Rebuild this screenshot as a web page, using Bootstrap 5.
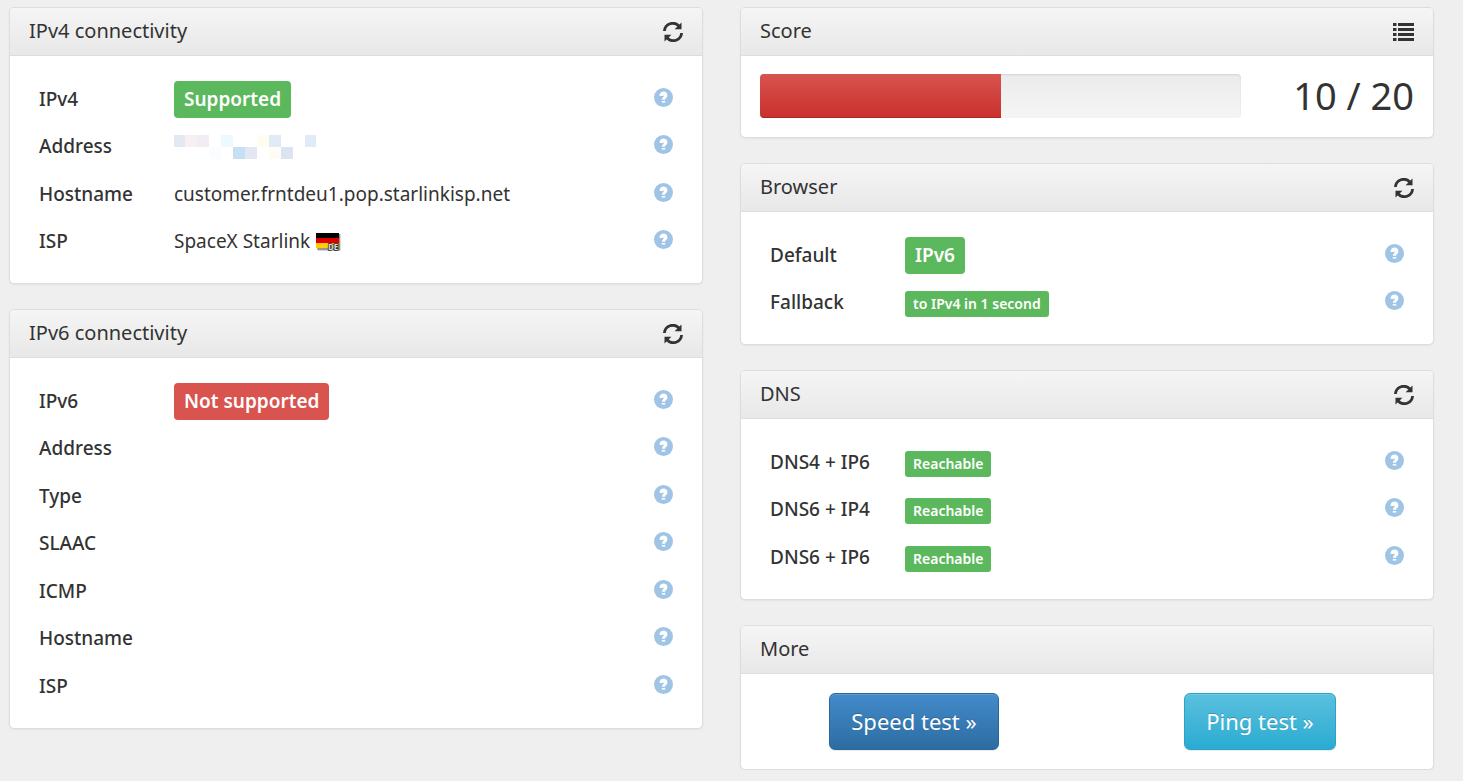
<!DOCTYPE html>
<html lang="en">
<head>
<meta charset="utf-8">
<meta name="viewport" content="width=device-width, initial-scale=1">
<title>IPv6 test</title>
<link href="https://cdn.jsdelivr.net/npm/bootstrap@5.3.0/dist/css/bootstrap.min.css" rel="stylesheet">
<style>
body{background:#efefef;color:#333;font-family:"Noto Sans",sans-serif;font-size:19px;font-weight:400;line-height:27px}
.page{padding:7px 29px 0 9px}
.cols{display:grid;gap:25px 37px}
@media (min-width:992px){.cols{grid-template-columns:1fr 1fr}}
.stack{display:flex;flex-direction:column;gap:25px;min-width:0}
.panel{background:#fff;border:1px solid #ddd;border-radius:5px;box-shadow:0 1px 2px rgba(0,0,0,.05)}
.panel-head{height:48px;padding:0 19px;background:linear-gradient(#f5f5f5,#e8e8e8);border-bottom:1px solid #ddd;border-radius:4px 4px 0 0}
.panel-head h2{font-size:20px;line-height:27px;font-weight:400;margin:0;padding-bottom:2px}
.icon-btn{border:0;background:none;padding:0;color:#333;display:flex}
.info{padding:18px 19px 19px}
.info table{width:100%}
.info tr{height:48px}
.info tr:nth-child(even){height:47px}
.info th,.info td{padding:2px 10px 0;vertical-align:middle}
.info th{width:135px;font-weight:500;white-space:nowrap}
.info td:last-child{width:39px;padding-top:0}
.info td:last-child a{display:block;height:21px;color:#9fc4e5}
.info svg{display:block}
.tag-lg,.tag-sm{display:inline-block;color:#fff;font-weight:600;vertical-align:middle;white-space:nowrap}
.tag-lg{font-size:19px;line-height:27px;padding:5px 10px;border-radius:4px}
.tag-sm{font-size:14px;line-height:20px;padding:3px 8px;border-radius:3px;margin-top:3px}
.ok{background:#5cb85c}.bad{background:#d9534f}
.score{padding:18px 19px 19px}
.score .row{--bs-gutter-x:38px}
.score .progress{height:44px;border-radius:4px;background:linear-gradient(#ebebeb,#f5f5f5);box-shadow:inset 0 1px 2px rgba(0,0,0,.1)}
.score .progress-bar{background:linear-gradient(#d9534f,#c9302c);box-shadow:inset 0 -1px 0 rgba(0,0,0,.15)}
.points{font-size:38px;line-height:42px;white-space:nowrap}
.more{padding:19px 0}
.more .btn{font-size:22px;line-height:31px;padding:12px 21px;border-radius:6px;color:#fff;text-shadow:0 -1px 0 rgba(0,0,0,.2);box-shadow:inset 0 1px 0 rgba(255,255,255,.15),0 1px 1px rgba(0,0,0,.075)}
.speed{background:linear-gradient(#428bca,#2d6ca2);border-color:#2b669a}
.ping{background:linear-gradient(#5bc0de,#2aabd2);border-color:#28a4c9}
</style>
</head>
<body>
<svg class="d-none" aria-hidden="true">
  <symbol id="refresh" viewBox="0 0 20 20"><g fill="none" stroke="currentColor" stroke-width="2.800"><path d="M1.400 9A8.300 8.300 0 0 1 15.800 4"/><path d="M18.600 11A8.300 8.300 0 0 1 4.200 16"/></g><path fill="currentColor" d="M18.500 .6V7.200H11.600zM1.500 19.400V12.800H8.400z"/></symbol>
  <symbol id="list" viewBox="0 0 21 18"><path fill="currentColor" d="M0 0h3.500v3H0zM5 0h16v3H5zM0 5h3.500v3H0zM5 5h16v3H5zM0 10h3.500v3H0zM5 10h16v3H5zM0 15h3.500v3H0zM5 15h16v3H5z"/></symbol>
  <symbol id="help" viewBox="0 0 19 19"><circle cx="9.500" cy="9.500" r="9.500" fill="currentColor"/><path d="M5.500 7.900C5.200 2.300 13.600 2.300 13.400 7.300C13.300 10.300 11.200 9.800 11.200 11.700H7.900C7.800 9.400 9.800 9.300 9.800 7.900C9.700 7.300 8.900 7.300 8.800 7.900z" fill="#fff"/><path d="M7.800 13h3.400v1.600H7.800z" fill="#fff"/></symbol>
</svg>
<main class="page">
<div class="cols">
  <div class="stack">
    <section class="panel">
      <div class="panel-head d-flex align-items-center justify-content-between"><h2>IPv4 connectivity</h2><button class="icon-btn" type="button" aria-label="Refresh IPv4"><svg width="20" height="20"><use href="#refresh"/></svg></button></div>
      <div class="info"><table>
        <tr><th scope="row">IPv4</th><td><span class="tag-lg ok">Supported</span></td><td><a href="#" aria-label="Help"><svg width="19" height="19"><use href="#help"/></svg></a></td></tr>
        <tr><th scope="row">Address</th><td><svg width="142" height="24" role="img" aria-label="Hidden address"><path fill="#e2e9f3" d="M0 0h11v12H0z"/><path fill="#f8eff3" d="M11 0h12v12H11z"/><path fill="#f2ecf4" d="M23 0h12v12H23z"/><path fill="#ecfaff" d="M47 0h12v12H47z"/><path fill="#fffdf0" d="M83 0h12v12H83z"/><path fill="#e1ebf6" d="M95 0h12v12H95zM131 0h11v12h-11z"/><path fill="#fbfcff" d="M35 12h12v12H35z"/><path fill="#c7dff4" d="M59 12h12v12H59z"/><path fill="#e2e7f3" d="M71 12h12v12H71z"/><path fill="#fffbf5" d="M95 12h12v12H95z"/><path fill="#dbe5f1" d="M107 12h12v12h-12z"/></svg></td><td><a href="#" aria-label="Help"><svg width="19" height="19"><use href="#help"/></svg></a></td></tr>
        <tr><th scope="row">Hostname</th><td>customer.frntdeu1.pop.starlinkisp.net</td><td><a href="#" aria-label="Help"><svg width="19" height="19"><use href="#help"/></svg></a></td></tr>
        <tr><th scope="row">ISP</th><td><span class="d-flex align-items-center gap-1">SpaceX Starlink <svg width="28" height="19" role="img" aria-label="Germany"><path fill="#000" fill-opacity=".15" d="M4 2h23v17H4z"/><path fill="#000" fill-opacity=".3" d="M3 2h23v16H3z"/><path d="M2 1h23v5H2z"/><path fill="#d00" d="M2 6h23v5H2z"/><path fill="#ffce00" d="M2 11h23v5H2z"/><text x="14" y="18" font-size="8" font-weight="700" fill="#ddd" stroke="#222" stroke-width="1.500" paint-order="stroke">DE</text></svg></span></td><td><a href="#" aria-label="Help"><svg width="19" height="19"><use href="#help"/></svg></a></td></tr>
      </table></div>
    </section>
    <section class="panel">
      <div class="panel-head d-flex align-items-center justify-content-between"><h2>IPv6 connectivity</h2><button class="icon-btn" type="button" aria-label="Refresh IPv6"><svg width="20" height="20"><use href="#refresh"/></svg></button></div>
      <div class="info"><table>
        <tr><th scope="row">IPv6</th><td><span class="tag-lg bad">Not supported</span></td><td><a href="#" aria-label="Help"><svg width="19" height="19"><use href="#help"/></svg></a></td></tr>
        <tr><th scope="row">Address</th><td></td><td><a href="#" aria-label="Help"><svg width="19" height="19"><use href="#help"/></svg></a></td></tr>
        <tr><th scope="row">Type</th><td></td><td><a href="#" aria-label="Help"><svg width="19" height="19"><use href="#help"/></svg></a></td></tr>
        <tr><th scope="row">SLAAC</th><td></td><td><a href="#" aria-label="Help"><svg width="19" height="19"><use href="#help"/></svg></a></td></tr>
        <tr><th scope="row">ICMP</th><td></td><td><a href="#" aria-label="Help"><svg width="19" height="19"><use href="#help"/></svg></a></td></tr>
        <tr><th scope="row">Hostname</th><td></td><td><a href="#" aria-label="Help"><svg width="19" height="19"><use href="#help"/></svg></a></td></tr>
        <tr><th scope="row">ISP</th><td></td><td><a href="#" aria-label="Help"><svg width="19" height="19"><use href="#help"/></svg></a></td></tr>
      </table></div>
    </section>
  </div>
  <div class="stack">
    <section class="panel">
      <div class="panel-head d-flex align-items-center justify-content-between"><h2>Score</h2><button class="icon-btn" type="button" aria-label="Score details"><svg width="21" height="18"><use href="#list"/></svg></button></div>
      <div class="score"><div class="row"><div class="col-9"><div class="progress" role="progressbar" aria-label="Score" aria-valuenow="10" aria-valuemin="0" aria-valuemax="20"><div class="progress-bar" style="width:50%"></div></div></div><div class="col-3 points text-end">10 / 20</div></div></div>
    </section>
    <section class="panel">
      <div class="panel-head d-flex align-items-center justify-content-between"><h2>Browser</h2><button class="icon-btn" type="button" aria-label="Refresh browser"><svg width="20" height="20"><use href="#refresh"/></svg></button></div>
      <div class="info"><table>
        <tr><th scope="row">Default</th><td><span class="tag-lg ok">IPv6</span></td><td><a href="#" aria-label="Help"><svg width="19" height="19"><use href="#help"/></svg></a></td></tr>
        <tr><th scope="row">Fallback</th><td><span class="tag-sm ok">to IPv4 in 1 second</span></td><td><a href="#" aria-label="Help"><svg width="19" height="19"><use href="#help"/></svg></a></td></tr>
      </table></div>
    </section>
    <section class="panel">
      <div class="panel-head d-flex align-items-center justify-content-between"><h2>DNS</h2><button class="icon-btn" type="button" aria-label="Refresh DNS"><svg width="20" height="20"><use href="#refresh"/></svg></button></div>
      <div class="info"><table>
        <tr><th scope="row">DNS4 + IP6</th><td><span class="tag-sm ok">Reachable</span></td><td><a href="#" aria-label="Help"><svg width="19" height="19"><use href="#help"/></svg></a></td></tr>
        <tr><th scope="row">DNS6 + IP4</th><td><span class="tag-sm ok">Reachable</span></td><td><a href="#" aria-label="Help"><svg width="19" height="19"><use href="#help"/></svg></a></td></tr>
        <tr><th scope="row">DNS6 + IP6</th><td><span class="tag-sm ok">Reachable</span></td><td><a href="#" aria-label="Help"><svg width="19" height="19"><use href="#help"/></svg></a></td></tr>
      </table></div>
    </section>
    <section class="panel">
      <div class="panel-head d-flex align-items-center"><h2>More</h2></div>
      <div class="more row g-0 text-center"><div class="col-6"><button class="btn speed" type="button">Speed test »</button></div><div class="col-6"><button class="btn ping" type="button">Ping test »</button></div></div>
    </section>
  </div>
</div>
</main>
<script src="https://cdn.jsdelivr.net/npm/bootstrap@5.3.0/dist/js/bootstrap.bundle.min.js"></script>
</body>
</html>
